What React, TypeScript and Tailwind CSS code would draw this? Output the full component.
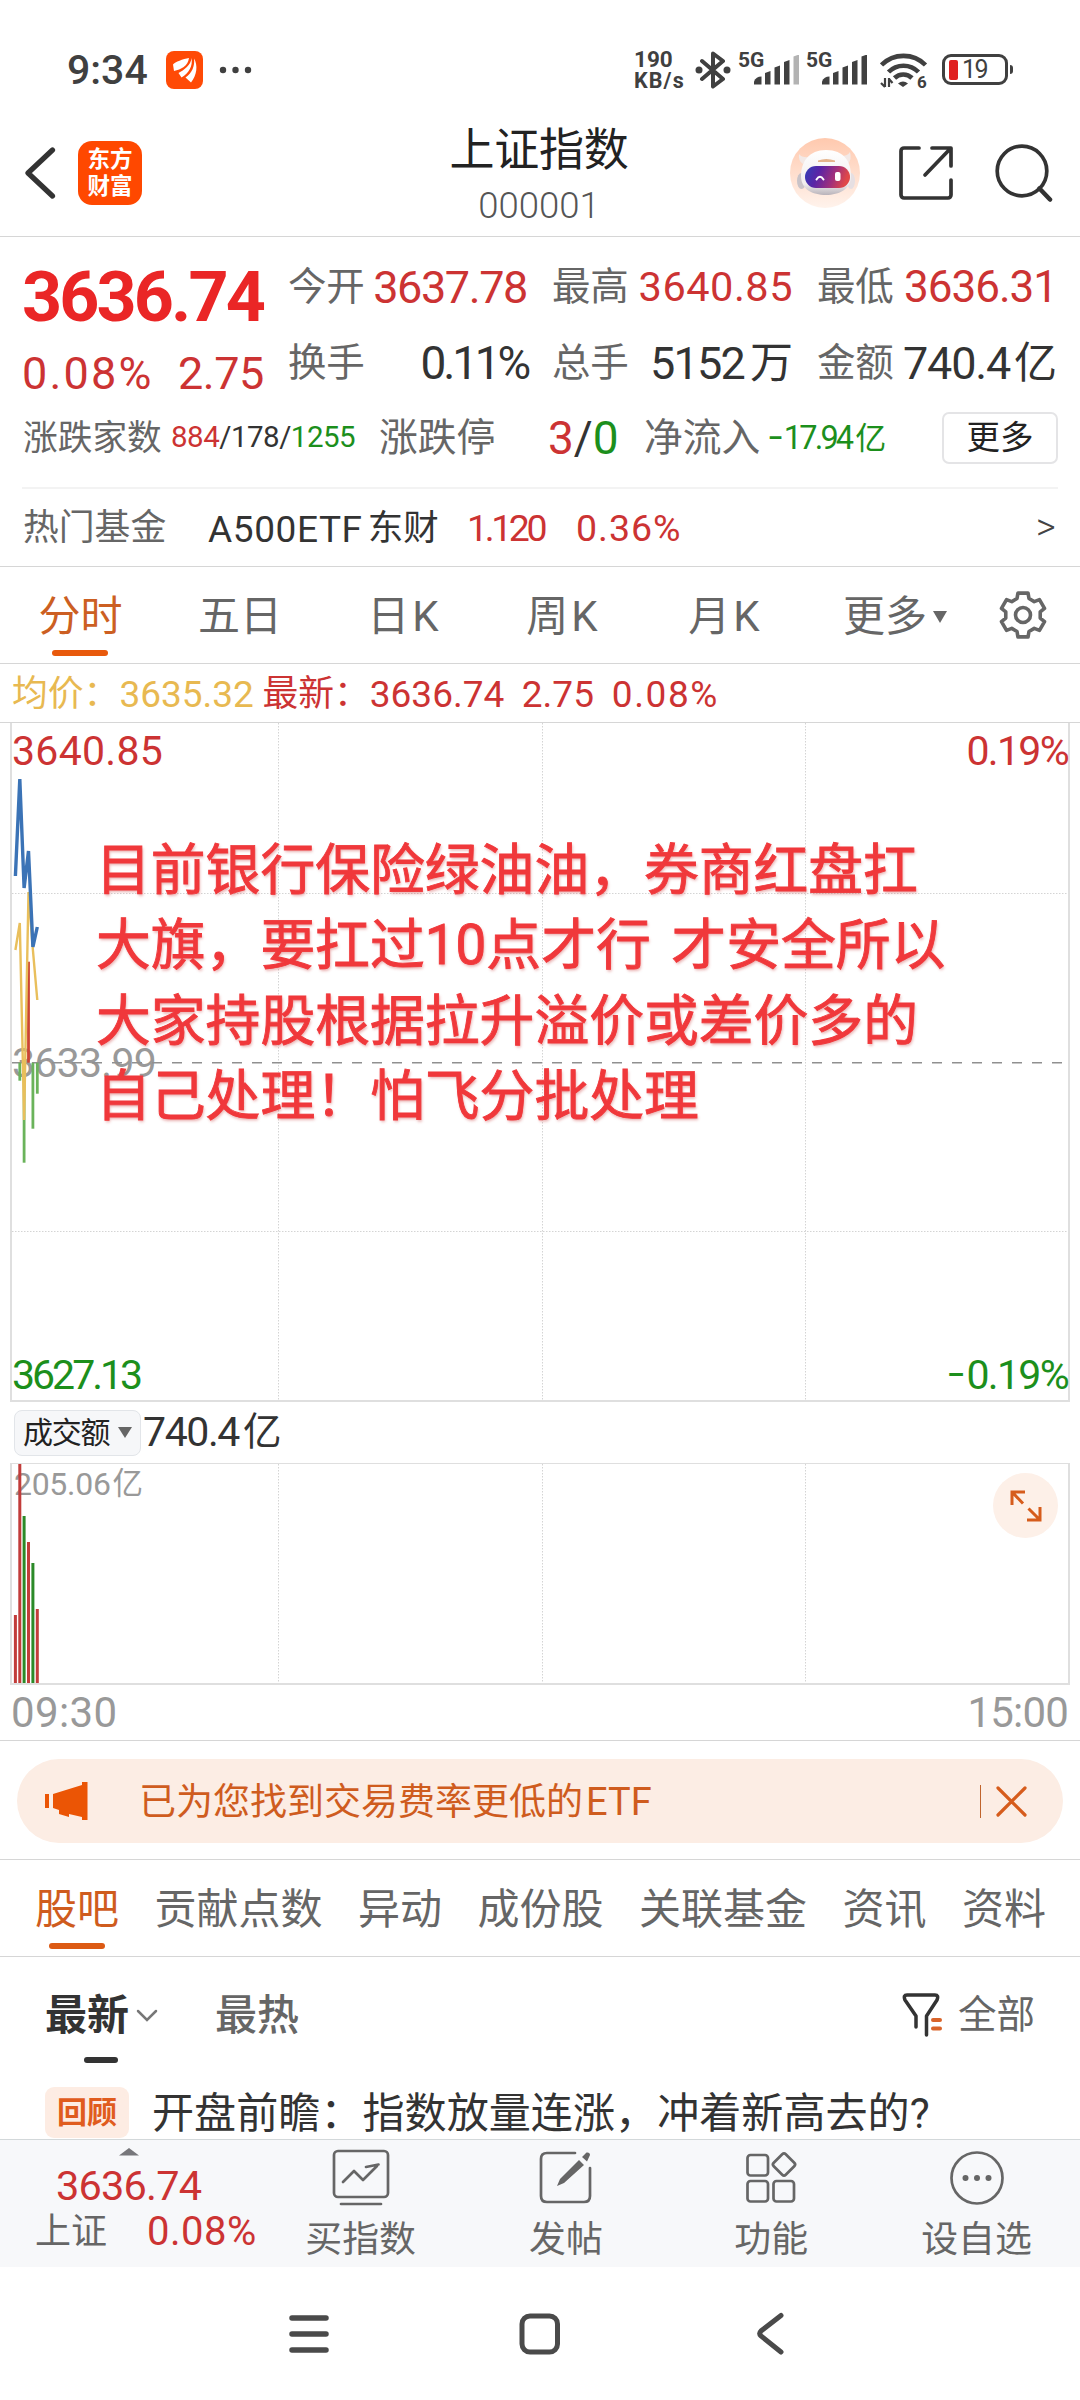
import type { ReactNode } from "react";

const gearPoints = Array.from({ length: 6 })
  .flatMap((_, i) =>
    [
      [17.5, -20],
      [22.5, -13],
      [22.5, 13],
      [17.5, 20],
    ].map(([r, offset]) => {
      const angle = ((i * 60 - 90 + offset) * Math.PI) / 180;
      return `${(24 + r * Math.cos(angle)).toFixed(2)},${(25 + r * Math.sin(angle)).toFixed(2)}`;
    })
  )
  .join(" ");

function Signal({ weak = false }: { weak?: boolean }) {
  return (
    <svg className="absolute left-[16px] top-[4px]" width="46" height="31" viewBox="0 0 46 31" fill="#404040">
      <path d="M0 29.5v-3q2-5 7.5-5v8z" />
      <path d="M11 29.5v-11.5l5.5-2v13.5z" />
      <path d="M20.5 29.5v-17l5.5-2v19z" />
      <path d="M30 29.5v-22.5l5.5-2v24.5z" />
      <path d="M39.5 29.5v-28l5.5-2v30z" fill={weak ? "#b3b3b3" : "#404040"} />
    </svg>
  );
}

function StatusBar() {
  return (
    <div className="flex h-[104px] items-start pt-[51px] text-[#404040]">
      <span className="ml-[67px] mt-[-1px] w-[99px] text-[41px] font-medium leading-[40px]">9:34</span>
      <svg width="37" height="38" viewBox="0 0 37 38">
        <rect width="37" height="38" rx="8" fill="#ff4a06" />
        <g fill="#fff">
          <path d="M23 7C17 8 9 11 7 13.5L8 20C15 18.5 22 15 23 7Z" />
          <path d="M25.5 7C25 14 18 19 12.5 22L15.5 26.5C23 22 27 15 25.5 7Z" />
          <path d="M28 7.5C32 14 31 24 25 31.5L19.5 26.5C26 22 29 15 28 7.5Z" />
        </g>
      </svg>
      <svg className="ml-[16px] mt-[15px]" width="34" height="8" viewBox="0 0 34 8" fill="#404040">
        <circle cx="4" cy="4" r="3.2" />
        <circle cx="16.5" cy="4" r="3.2" />
        <circle cx="29" cy="4" r="3.2" />
      </svg>
      <div className="ml-[381px] mt-[-2px] flex w-[60px] flex-col font-bold">
        <span className="text-[22.5px] leading-[21px]">190</span>
        <span className="text-[21.5px] leading-[21px] tracking-[1.1px]">KB/s</span>
      </div>
      <svg className="ml-[1px]" width="36" height="38" viewBox="0 0 36 38" fill="none" stroke="#404040" strokeWidth="4">
        <path d="M7 10L28 28L18 35.5V2.5L28 10L7 28" strokeLinejoin="round" strokeLinecap="round" />
        <circle cx="4" cy="19" r="3.5" fill="#404040" stroke="none" />
        <circle cx="32" cy="19" r="3.5" fill="#404040" stroke="none" />
      </svg>
      <div className="relative ml-[7px] h-[38px] w-[68px]">
        <span className="block text-[21px] font-bold leading-[18px]">5G</span>
        <Signal weak />
      </div>
      <div className="relative h-[38px] w-[68px]">
        <span className="block text-[21px] font-bold leading-[18px]">5G</span>
        <Signal />
      </div>
      <div className="relative ml-[6px] h-[38px] w-[48px]">
        <svg width="48" height="38" viewBox="0 0 48 38" fill="none" stroke="#404040" strokeWidth="4.6">
          <path d="M1.5 14A31 31 0 0 1 45.5 14" />
          <path d="M8.5 21A21 21 0 0 1 38.5 21" />
          <path d="M14.5 27A12.5 12.5 0 0 1 32 27" />
          <path d="M18 32.5Q23 28.5 28 32.5L23 36Z" fill="#404040" stroke="none" />
          <path d="M5 27v9M1 32l4 4M9 36v-9M9 28l3.5 4" strokeWidth="2.2" />
        </svg>
        <span className="absolute left-[37px] top-[21px] text-[17px] font-bold leading-[20px]">6</span>
      </div>
      <div className="ml-[14px] mt-[3px] flex h-[31px] w-[66px] items-center rounded-[9px] border-[3px] border-[#404040] pl-[4px]">
        <span className="h-[20px] w-[9px] rounded-[2px] bg-[#e02020]" />
        <span className="ml-[4px] text-[25px] leading-none tracking-[-1.5px]">19</span>
      </div>
      <span className="ml-[2px] mt-[14px] h-[9px] w-[3px] rounded-r-full bg-[#404040]" />
    </div>
  );
}

function Robot() {
  return (
    <svg width="70" height="70" viewBox="0 0 70 70">
      <defs>
        <linearGradient id="halo" x1="0" y1="0" x2="0" y2="1">
          <stop offset="0" stopColor="#ffc9ae" />
          <stop offset="1" stopColor="#fff3ec" />
        </linearGradient>
        <linearGradient id="visor" x1="0" y1="0" x2="1" y2="0.2">
          <stop offset="0" stopColor="#2f3fb8" />
          <stop offset="0.35" stopColor="#5a24a6" />
          <stop offset="0.7" stopColor="#a0307c" />
          <stop offset="1" stopColor="#e04848" />
        </linearGradient>
        <linearGradient id="shell" x1="0" y1="0" x2="0" y2="1">
          <stop offset="0" stopColor="#ffffff" />
          <stop offset="0.75" stopColor="#f1eeee" />
          <stop offset="1" stopColor="#b9b3ba" />
        </linearGradient>
      </defs>
      <circle cx="35" cy="35" r="35" fill="url(#halo)" />
      <path d="M9 16Q8 23 13 26L20 19Q12 20 9 16ZM60 14Q62 21 58 26L51 18Q58 18 60 14Z" fill="#f3e9e6" />
      <ellipse cx="11.5" cy="43" rx="4.5" ry="8" fill="#c9c3c8" />
      <ellipse cx="61" cy="43" rx="4" ry="8" fill="#e6dfe2" />
      <path d="M36 12C54 12 61 24 61 38C61 51 49 57 36 57C22 57 11 51 11 38C11 24 19 12 36 12Z" fill="url(#shell)" />
      <path d="M28 22.5Q36 19.5 45 22.5V24H28Z" fill="#e5b48c" />
      <rect x="15" y="28" width="45" height="22" rx="11" fill="url(#visor)" />
      <path d="M26.5 41.5Q30 36 33.5 41.5" fill="none" stroke="#fff" strokeWidth="2" strokeLinecap="round" />
      <rect x="45" y="34" width="5.5" height="9" rx="2" fill="#fff" />
    </svg>
  );
}

function Header() {
  return (
    <header className="flex h-[133px] items-center border-b border-[#d6d6d6] pt-[6px]">
      <svg className="ml-[24px]" width="32" height="52" viewBox="0 0 32 52" fill="none" stroke="#333" strokeWidth="5.2">
        <path d="M28.5 3L4 26L28.5 49" strokeLinecap="round" strokeLinejoin="round" />
      </svg>
      <div className="ml-[22px] flex h-[64px] w-[64px] flex-col items-center justify-center rounded-[14px] bg-[#ff4800] text-[22.5px] font-bold leading-[27px] text-white">
        <span>东方</span>
        <span>财富</span>
      </div>
      <div className="ml-[217px] mt-[10px] flex w-[360px] flex-col items-center">
        <span className="text-[45px] leading-[56px] tracking-[-0.2px] text-[#222]">上证指数</span>
        <span className="text-[36.5px] font-light leading-[54px] text-[#555]">000001</span>
      </div>
      <div className="ml-[71px] flex items-center">
        <Robot />
        <svg className="ml-[39px]" width="55" height="56" viewBox="0 0 55 56" fill="none" stroke="#333" strokeWidth="3.7">
          <path d="M20 3H5a3 3 0 0 0-3 3V50a3 3 0 0 0 3 3H49a3 3 0 0 0 3-3V35" strokeLinecap="round" />
          <path d="M33 3H52V21M51 4L26 30" strokeLinecap="round" strokeLinejoin="round" />
        </svg>
        <svg className="ml-[41px]" width="58" height="58" viewBox="0 0 58 58" fill="none" stroke="#333" strokeWidth="3.7">
          <circle cx="27" cy="27" r="24.8" />
          <path d="M44.5 44.5L55 55.5" strokeLinecap="round" strokeWidth="4.5" />
        </svg>
      </div>
    </header>
  );
}

function Stat({ label, children }: { label: string; children: ReactNode }) {
  return (
    <div className="flex h-[76px] items-center justify-between leading-none">
      <span className="text-[38.5px] tracking-[-0.2px] text-[#666]">{label}</span>
      {children}
    </div>
  );
}

function Quote() {
  return (
    <section className="h-[330px] border-b border-[#d6d6d6]">
      <div className="flex h-[163px]">
        <div className="w-[288px] pl-[22px] pt-[21px] leading-none">
          <div className="flex h-[77px] items-center text-[70px] font-bold tracking-[-2.9px] text-[#ea2626]">3636.74</div>
          <div className="flex h-[77px] items-center text-[45px] text-[#cc3333]">
            <span className="w-[156px] tracking-[2.2px]">0.08%</span>
            <span className="tracking-[-0.5px]">2.75</span>
          </div>
        </div>
        <div className="grid grid-cols-[240px_241px_240px] gap-x-[24px] pt-[12px]">
          <Stat label="今开">
            <span className="mr-[1px] text-[45px] tracking-[-1.4px] text-[#cc3333]">3637.78</span>
          </Stat>
          <Stat label="最高">
            <span className="text-[41.5px] tracking-[0.5px] text-[#cc3333]">3640.85</span>
          </Stat>
          <Stat label="最低">
            <span className="text-[44px] tracking-[-1px] text-[#cc3333]">3636.31</span>
          </Stat>
          <Stat label="换手">
            <span className="text-[46px] tracking-[-3.2px] text-[#333]">0.11%</span>
          </Stat>
          <Stat label="总手">
            <span className="flex items-center text-[45px] text-[#333]">
              <span className="mr-[6px] tracking-[-1.8px]">5152</span>
              <span className="text-[43px]">万</span>
            </span>
          </Stat>
          <Stat label="金额">
            <span className="flex items-center text-[45px] text-[#333]">
              <span className="mr-[4px] tracking-[-1.2px]">740.4</span>
              <span className="text-[43px]">亿</span>
            </span>
          </Stat>
        </div>
      </div>
      <div className="flex h-[76px] items-center leading-none text-[#666]">
        <span className="ml-[23px] w-[148px] text-[34.7px]">涨跌家数</span>
        <span className="w-[208px] text-[29.5px] tracking-[-0.5px] text-[#333]">
          <span className="text-[#cc3333]">884</span>/178/<span className="text-[#1c8f1c]">1255</span>
        </span>
        <span className="w-[169px] text-[38.8px]">涨跌停</span>
        <span className="w-[96px] text-[46px] text-[#333]">
          <span className="text-[#cc3333]">3</span>/<span className="text-[#1c8f1c]">0</span>
        </span>
        <span className="w-[124px] text-[38.8px]">净流入</span>
        <span className="flex w-[174px] items-center text-[32.5px] tracking-[-2.8px] text-[#1c8f1c]">
          <span className="mr-[4px] text-[23px] font-bold">–</span>
          <span>17.94</span>
          <span className="ml-[4px] text-[31px]">亿</span>
        </span>
        <span className="flex h-[52px] w-[116px] items-center justify-center rounded-[7px] border-2 border-[#e4e4e6] text-[33.5px] text-[#222]">
          更多
        </span>
      </div>
      <div className="mx-[22px] mt-[11px] h-[2px] bg-[#f3f3f3]" />
      <div className="flex h-[77px] items-center pt-[3px] leading-none">
        <span className="ml-[23px] w-[185px] text-[35.8px] text-[#666]">热门基金</span>
        <span className="flex w-[259px] items-center text-[37px] text-[#333]">
          <span className="mr-[5px] tracking-[0.6px]">A500ETF</span>
          <span className="text-[35.5px]">东财</span>
        </span>
        <span className="w-[109px] text-[37.5px] tracking-[-3.4px] text-[#cc3333]">1.120</span>
        <span className="w-[460px] text-[37.5px] tracking-[1px] text-[#cc3333]">0.36%</span>
        <span className="mt-[-4px] text-[38px] font-light text-[#444]">&gt;</span>
      </div>
    </section>
  );
}

function PeriodTabs() {
  return (
    <nav className="flex h-[97px] items-center border-b border-[#d6d6d6] pt-[3px] text-[42px] leading-none text-[#666]">
      <span className="relative w-[161px] text-center text-[#cc5f22]">
        分时
        <span className="absolute left-[52px] top-[54px] h-[6px] w-[56px] rounded-full bg-[#e8590c]" />
      </span>
      <span className="w-[158px] text-center">五日</span>
      <span className="w-[168px] text-center">
        日<span className="ml-[3px]">K</span>
      </span>
      <span className="w-[150px] text-center">
        周<span className="ml-[3px]">K</span>
      </span>
      <span className="w-[174px] text-center">
        月<span className="ml-[3px]">K</span>
      </span>
      <span className="ml-[32px]">更多</span>
      <svg className="ml-[6px]" width="14" height="12" viewBox="0 0 14 12" fill="#666">
        <path d="M0 0H14L7 12Z" />
      </svg>
      <svg className="ml-[52px] mt-[-3px]" width="48" height="50" viewBox="0 0 48 50" fill="none" stroke="#666" strokeWidth="3.6">
        <polygon points={gearPoints} strokeLinejoin="round" />
        <circle cx="24" cy="25" r="7.5" />
      </svg>
    </nav>
  );
}

// one entry per traded minute since the open
const minutes = [
  { x: 3.4, price: 153, avg: 227, delta: 0, volume: 69, up: true },
  { x: 7.8, price: 56, avg: 200, delta: 18, volume: 220, up: true },
  { x: 12.1, price: 165, avg: 397, delta: 100, volume: 168, up: false },
  { x: 16.5, price: 128, avg: 169, delta: -101, volume: 142, up: true },
  { x: 20.9, price: 224, avg: 227, delta: 66, volume: 121, up: false },
  { x: 25.3, price: 204, avg: 277, delta: 31, volume: 75, up: true },
];

const ZERO_Y = 339.7;

const noteLines = [
  "目前银行保险绿油油，券商红盘扛",
  "大旗，要扛过10点才行 才安全所以",
  "大家持股根据拉升溢价或差价多的",
  "自己处理！怕飞分批处理",
];

function PriceChart() {
  const line = (key: "price" | "avg") => minutes.map((m) => `${m.x},${m[key]}`).join(" ");

  return (
    <div className="relative ml-[10px] h-[679px] w-[1060px] border-x-2 border-b-2 border-[#dfdfdf] text-[41px] leading-none">
      <span className="absolute left-0 top-[8px] tracking-[0.3px] text-[#cc3333]">3640.85</span>
      <span className="absolute right-0 top-[8px] tracking-[-1.7px] text-[#cc3333]">0.19%</span>
      <span className="absolute left-0 top-[320px] tracking-[-0.7px] text-[#999]">3633.99</span>
      <span className="absolute bottom-[4px] left-0 tracking-[-3px] text-[#1c8f1c]">3627.13</span>
      <span className="absolute bottom-[4px] right-0 flex items-center tracking-[-1.7px] text-[#1c8f1c]">
        <span className="mr-[4px] text-[27px] font-bold">–</span>
        <span>0.19%</span>
      </span>
      <svg className="absolute left-0 top-0" width="1056" height="677" viewBox="0 0 1056 677" fill="none">
        <g stroke="#d4d4d4" strokeWidth="1" strokeDasharray="1.5 1.5">
          <path d="M266.5 0V677M530.5 0V677M793.5 0V677" />
          <path d="M0 170.5H1056M0 508.5H1056" />
        </g>
        <path d={`M0 ${ZERO_Y}H1056`} stroke="#909090" strokeWidth="1.6" strokeDasharray="10 10" />
        {minutes.map((m) => (
          <path
            key={m.x}
            d={`M${m.x} ${ZERO_Y}v${m.delta}`}
            stroke={m.delta < 0 ? "#cc4433" : "#6ab35a"}
            strokeWidth="2.8"
          />
        ))}
        <polyline points={line("avg")} stroke="#e9bf5c" strokeWidth="2.4" />
        <polyline points={line("price")} stroke="#3b73b6" strokeWidth="3.4" strokeMiterlimit="1" />
      </svg>
      <div className="absolute left-[84px] top-[110px] text-[54.8px] leading-[75.4px] text-[#f0383b] [-webkit-text-stroke:0.9px_#f0383b] [text-shadow:1px_2px_3px_rgba(200,60,60,0.4)] [word-spacing:7px]">
        {noteLines.map((text) => (
          <p key={text}>{text}</p>
        ))}
      </div>
    </div>
  );
}

function VolumeChart() {
  return (
    <>
      <div className="flex h-[61px] items-center leading-none text-[#333]">
        <span className="ml-[14px] flex h-[46px] w-[127px] items-center rounded-[8px] border border-[#e2e5e9] bg-[#f6f7f9] pl-[8px] text-[30px] tracking-[-1.3px] text-[#222]">
          成交额
          <svg className="ml-[9px]" width="14" height="11" viewBox="0 0 14 11" fill="#666">
            <path d="M0 0H14L7 11Z" />
          </svg>
        </span>
        <span className="ml-[2px] text-[41px] tracking-[-1.4px]">740.4</span>
        <span className="ml-[4px] text-[38.5px]">亿</span>
      </div>
      <div className="relative ml-[10px] h-[222px] w-[1060px] border-x-2 border-b-2 border-t border-[#dfdfdf]">
        <div className="absolute left-[2px] top-[4px] flex items-center text-[32px] leading-none tracking-[-0.3px] text-[#999]">
          <span>205.06</span>
          <span className="ml-[2px] text-[30.5px]">亿</span>
        </div>
        <svg className="absolute left-0 top-0" width="1056" height="219" viewBox="0 0 1056 219">
          <path
            d="M266.5 0V219M530.5 0V219M793.5 0V219"
            stroke="#d4d4d4"
            strokeWidth="1"
            strokeDasharray="1.5 1.5"
          />
          {minutes.map((m) => (
            <rect
              key={m.x}
              x={m.x - 1.5}
              y={220 - m.volume}
              width="3"
              height={m.volume}
              fill={m.up ? "#c23c3a" : "#2b8a28"}
            />
          ))}
        </svg>
        <div className="absolute right-[10px] top-[9px] flex h-[65px] w-[65px] items-center justify-center rounded-full bg-[#fdf0e8]">
          <svg width="32" height="32" viewBox="0 0 32 32" fill="none" stroke="#d65c1c" strokeWidth="3">
            <path d="M2 15V2H15M2 2L13 13.5" />
            <path d="M30 17V30H17M30 30L18.5 18.5" />
          </svg>
        </div>
      </div>
      <div className="flex h-[56px] items-center justify-between border-b border-[#d6d6d6] pl-[11px] pr-[12px] text-[42px] leading-none text-[#999]">
        <span className="tracking-[0.4px]">09:30</span>
        <span className="tracking-[-0.8px]">15:00</span>
      </div>
    </>
  );
}

function Banner() {
  return (
    <div className="h-[119px] border-b border-[#d6d6d6] pt-[18px]">
      <div className="mx-[17px] flex h-[84px] items-center rounded-full bg-[#fcede4] leading-none text-[#cf5c1e]">
        <svg className="ml-[28px]" width="43" height="38" viewBox="0 0 43 38" fill="#eb5505">
          <path d="M0 12H4V26H0ZM8 12L37 3V0H42.5V38H37V35L24 32V35L14 32V28L8 26Z" />
        </svg>
        <span className="ml-[51px] mt-[2px] text-[37px]">已为您找到交易费率更低的</span>
        <span className="ml-[3px] mt-[2px] text-[38px]">ETF</span>
        <span className="ml-auto h-[33px] w-px bg-[#c0642c]" />
        <svg className="ml-[15px] mr-[36px]" width="31" height="31" viewBox="0 0 31 31" stroke="#d65c1c" strokeWidth="3.2">
          <path d="M2 2L29 29M29 2L2 29" strokeLinecap="round" />
        </svg>
      </div>
    </div>
  );
}

const sections = ["股吧", "贡献点数", "异动", "成份股", "关联基金", "资讯", "资料"];

function SectionTabs() {
  return (
    <nav className="flex h-[97px] items-center gap-[35.5px] border-b border-[#d6d6d6] pl-[35px] pt-[3px] text-[42px] leading-none text-[#666]">
      {sections.map((name, i) => (
        <span key={name} className={i === 0 ? "relative text-[#cf5c1e]" : ""}>
          {name}
          {i === 0 && <span className="absolute left-[14px] top-[54px] h-[6px] w-[56px] rounded-full bg-[#dc5a14]" />}
        </span>
      ))}
    </nav>
  );
}

function Posts() {
  return (
    <section className="h-[182px] overflow-hidden leading-none">
      <div className="flex h-[116px] items-center pt-[2px]">
        <span className="relative ml-[45px] text-[42px] font-bold text-[#333]">
          最新
          <span className="absolute left-[39px] top-[62px] h-[6px] w-[34px] rounded-full bg-[#333]" />
        </span>
        <svg className="ml-[7px]" width="22" height="14" viewBox="0 0 22 14" fill="none" stroke="#777" strokeWidth="2.5">
          <path d="M2 2L11 11L20 2" strokeLinecap="round" />
        </svg>
        <span className="ml-[57px] text-[42px] font-medium text-[#666]">最热</span>
        <svg className="ml-auto mt-[-2px]" width="42" height="45" viewBox="0 0 42 45" fill="none" stroke="#333" strokeWidth="3.5">
          <path
            d="M14 34V23L3 7Q1 2 5 2H33Q37 2 35 7L24.5 23V42"
            strokeLinecap="round"
            strokeLinejoin="round"
          />
          <path d="M31 27h7M31 35.5h7" stroke="#d9642a" strokeWidth="4" strokeLinecap="round" />
        </svg>
        <span className="ml-[14px] mr-[45px] mt-[-1px] text-[38.5px] text-[#666]">全部</span>
      </div>
      <div className="mt-[14px] flex h-[51px] items-center">
        <span className="ml-[45px] flex h-[51px] w-[84px] items-center justify-center rounded-[9px] bg-[#fdece3] text-[30px] font-bold text-[#e05c1e]">
          回顾
        </span>
        <span className="ml-[23px] mt-[3px] text-[42.1px] text-[#333]">开盘前瞻：指数放量连涨，冲着新高去的?</span>
      </div>
    </section>
  );
}

function ToolItem({ label, children }: { label: string; children: ReactNode }) {
  return (
    <div className="flex w-[205.3px] flex-col items-center">
      <svg className="mt-[8px]" width="60" height="58" viewBox="0 0 60 58" fill="none" stroke="#666" strokeWidth="2.7">
        {children}
      </svg>
      <span className="mt-[16px] text-[36.9px] text-[#666]">{label}</span>
    </div>
  );
}

function Toolbar() {
  return (
    <footer className="flex h-[128px] border-t border-[#d3d8da] bg-[#f7f8fa] leading-none">
      <div className="w-[258px] text-[#cc3333]">
        <svg className="ml-[119px] mt-[8px]" width="20" height="8" viewBox="0 0 20 8" fill="#77777b">
          <path d="M0 7.5L10 0L20 7.5Z" />
        </svg>
        <div className="ml-[56px] mt-[9px] text-[41.5px] tracking-[-0.8px]">3636.74</div>
        <div className="mt-[5px] flex items-center">
          <span className="ml-[35px] w-[112px] text-[36px] text-[#666]">上证</span>
          <span className="text-[40px] tracking-[0.5px]">0.08%</span>
        </div>
      </div>
      <ToolItem label="买指数">
        <rect x="3" y="3" width="54" height="46" rx="4" />
        <path d="M12 34L23 23L32 32L46 18M35 19L47.5 16.5" strokeLinejoin="round" strokeLinecap="round" />
        <path d="M10 56H50" strokeLinecap="round" />
      </ToolItem>
      <ToolItem label="发帖">
        <path d="M39 5H11Q5 5 5 11V48Q5 54 11 54H48Q54 54 54 48V20" strokeLinecap="round" />
        <path d="M43 12L48 17L28 35L21 38L24 31ZM46 9L50.5 4.5Q54 4 54 7L51 13.5Z" fill="#666" stroke="none" />
      </ToolItem>
      <ToolItem label="功能">
        <rect x="6.5" y="7" width="20.5" height="20.5" rx="3" />
        <rect x="6.5" y="33" width="20.5" height="20.5" rx="3" />
        <rect x="32.5" y="33" width="20.5" height="20.5" rx="3" />
        <rect x="34.5" y="8" width="17" height="17" rx="2.5" transform="rotate(45 43 16.5)" />
      </ToolItem>
      <ToolItem label="设自选">
        <circle cx="30" cy="30" r="25.5" />
        <g fill="#666" stroke="none">
          <circle cx="18.5" cy="30" r="3" />
          <circle cx="30" cy="30" r="3" />
          <circle cx="41.5" cy="30" r="3" />
        </g>
      </ToolItem>
    </footer>
  );
}

function SystemNav() {
  return (
    <div className="flex h-[133px] items-center text-[#4a4a4a]">
      <svg className="ml-[288px]" width="42" height="42" viewBox="0 0 42 42" stroke="currentColor" strokeWidth="5.5">
        <path d="M4 5H38M4 21H38M4 37H38" strokeLinecap="round" />
      </svg>
      <svg className="ml-[188px]" width="44" height="44" viewBox="0 0 44 44" fill="none" stroke="currentColor" strokeWidth="5">
        <rect x="4" y="4" width="35.5" height="36" rx="8" />
      </svg>
      <svg className="ml-[193px]" width="32" height="44" viewBox="0 0 32 44" fill="none" stroke="currentColor" strokeWidth="5">
        <path d="M26 3.5L6 19Q3.5 21.5 6 24L26 40" strokeLinecap="round" />
      </svg>
    </div>
  );
}

export default function App() {
  return (
    <div className="h-[2400px] w-[1080px] overflow-hidden whitespace-nowrap bg-white font-['Roboto','Noto_Sans_CJK_SC',sans-serif]">
      <StatusBar />
      <Header />
      <Quote />
      <PeriodTabs />
      <div className="flex h-[59px] items-center border-b border-[#d6d6d6] pt-[3px] text-[37px] leading-none text-[#cc3333]">
        <span className="ml-[12px] text-[35.8px] text-[#e8b951]">均价：</span>
        <span className="w-[143px] text-[#e8b951]">3635.32</span>
        <span className="text-[35.8px]">最新：</span>
        <span className="w-[152px]">3636.74</span>
        <span className="w-[90px]">2.75</span>
        <span className="tracking-[1.6px]">0.08%</span>
      </div>
      <PriceChart />
      <VolumeChart />
      <Banner />
      <SectionTabs />
      <Posts />
      <Toolbar />
      <SystemNav />
    </div>
  );
}
